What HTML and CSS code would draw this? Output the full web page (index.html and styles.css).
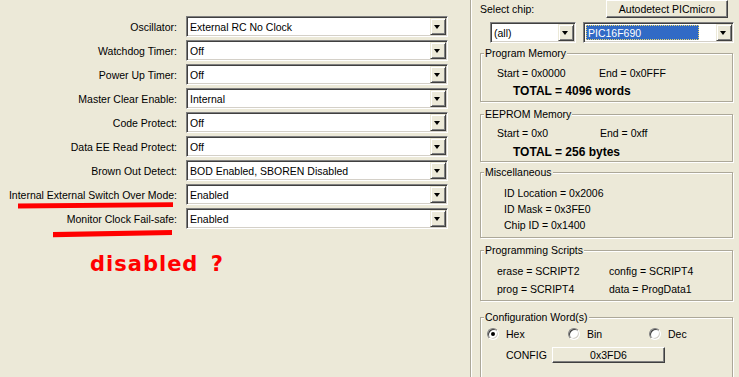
FILE: index.html
```html
<!DOCTYPE html>
<html>
<head>
<meta charset="utf-8">
<link rel="stylesheet" href="styles.css">
</head>
<body>
<div class="app">
  <div class="left">
    <div class="form">
      <div class="lbl">Oscillator:</div>
      <div class="combo"><span class="val">External RC No Clock</span><span class="arrow"></span></div>
      <div class="lbl">Watchdog Timer:</div>
      <div class="combo"><span class="val">Off</span><span class="arrow"></span></div>
      <div class="lbl">Power Up Timer:</div>
      <div class="combo"><span class="val">Off</span><span class="arrow"></span></div>
      <div class="lbl">Master Clear Enable:</div>
      <div class="combo"><span class="val">Internal</span><span class="arrow"></span></div>
      <div class="lbl">Code Protect:</div>
      <div class="combo"><span class="val">Off</span><span class="arrow"></span></div>
      <div class="lbl">Data EE Read Protect:</div>
      <div class="combo"><span class="val">Off</span><span class="arrow"></span></div>
      <div class="lbl">Brown Out Detect:</div>
      <div class="combo"><span class="val">BOD Enabled, SBOREN Disabled</span><span class="arrow"></span></div>
      <div class="lbl">Internal External Switch Over Mode:</div>
      <div class="combo"><span class="val">Enabled</span><span class="arrow"></span></div>
      <div class="lbl">Monitor Clock Fail-safe:</div>
      <div class="combo"><span class="val">Enabled</span><span class="arrow"></span></div>
    </div>
    <div class="note">disabled ?</div>
    <svg class="marks" width="470" height="377" viewBox="0 0 470 377">
      <polygon points="18,203.5 173,202.3 173,207 18,208.5" fill="#f00"/>
      <polygon points="53,232 172,230 172,235 53,237.3" fill="#f00"/>
    </svg>
  </div>
  <div class="right">
    <div class="row1">
      <span>Select chip:</span>
      <div class="btn autodetect">Autodetect PICmicro</div>
    </div>
    <div class="row2">
      <div class="combo family"><span class="val">(all)</span><span class="arrow"></span></div>
      <div class="combo chip"><span class="val"><span class="sel">PIC16F690</span></span><span class="arrow"></span></div>
    </div>
    <div class="group pm">
      <div class="legend">Program Memory</div>
      <div class="pair"><span class="c1">Start = 0x0000</span><span>End = 0x0FFF</span></div>
      <div class="total">TOTAL = 4096 words</div>
    </div>
    <div class="group ee">
      <div class="legend">EEPROM Memory</div>
      <div class="pair"><span class="c1">Start = 0x0</span><span>End = 0xff</span></div>
      <div class="total">TOTAL = 256 bytes</div>
    </div>
    <div class="group misc">
      <div class="legend">Miscellaneous</div>
      <div class="line">ID Location = 0x2006</div>
      <div class="line">ID Mask = 0x3FE0</div>
      <div class="line">Chip ID = 0x1400</div>
    </div>
    <div class="group scripts">
      <div class="legend">Programming Scripts</div>
      <div class="pair"><span class="c1">erase = SCRIPT2</span><span>config = SCRIPT4</span></div>
      <div class="pair"><span class="c1">prog = SCRIPT4</span><span>data = ProgData1</span></div>
    </div>
    <div class="group config">
      <div class="legend">Configuration Word(s)</div>
      <div class="radios">
        <div class="radio-item"><span class="radio checked"></span><span>Hex</span></div>
        <div class="radio-item"><span class="radio"></span><span>Bin</span></div>
        <div class="radio-item"><span class="radio"></span><span>Dec</span></div>
      </div>
      <div class="cfgrow">
        <span class="cfglbl">CONFIG</span>
        <div class="btn cfgbtn">0x3FD6</div>
      </div>
    </div>
  </div>
</div>
</body>
</html>
```
FILE: styles.css
```css
html, body {
  margin: 0;
  padding: 0;
  background: #ECE9D8;
  width: 739px;
  height: 377px;
  overflow: hidden;
  font-family: "Liberation Sans", Arial, sans-serif;
  font-size: 10.5px;
  color: #000;
}

.app {
  display: flex;
  height: 377px;
}

.left {
  position: relative;
  width: 470px;
  flex: none;
  padding-top: 16px;
  box-sizing: border-box;
}

.form {
  display: grid;
  grid-template-columns: 177px 262px;
  grid-auto-rows: 21px;
  column-gap: 9px;
  row-gap: 3px;
}

.lbl {
  display: flex;
  align-items: center;
  justify-content: flex-end;
  white-space: nowrap;
}

.combo {
  display: flex;
  box-sizing: border-box;
  height: 21px;
  background: #fff;
  border: 1px solid;
  border-color: #808080 #fff #fff #808080;
  box-shadow: inset 1px 1px 0 #404040, inset -1px -1px 0 #D4D0C8;
  padding: 1px;
}

.combo .val {
  flex: 1;
  display: flex;
  align-items: center;
  padding-left: 2px;
  white-space: nowrap;
  overflow: hidden;
}

.combo .arrow {
  position: relative;
  width: 16px;
  height: 17px;
  box-sizing: border-box;
  flex: none;
  background: #ECE9D8;
  border: 1px solid;
  border-color: #ECE9D8 #404040 #404040 #ECE9D8;
  box-shadow: inset 1px 1px 0 #fff, inset -1px -1px 0 #808080;
}

.combo .arrow::after {
  content: "";
  position: absolute;
  left: 3px;
  top: 6px;
  border-left: 3.5px solid transparent;
  border-right: 3.5px solid transparent;
  border-top: 4px solid #000;
}

.note {
  margin-top: 23px;
  margin-left: 90px;
  font-family: "DejaVu Sans", sans-serif;
  font-weight: bold;
  font-size: 21px;
  line-height: 24px;
  letter-spacing: 1px;
  word-spacing: 4px;
  color: #f00;
}

.marks {
  position: absolute;
  left: 0;
  top: 0;
  pointer-events: none;
}

.right {
  flex: 1;
  border-left: 1px solid #ACA899;
  box-shadow: inset 1px 0 0 #fff;
  padding: 0 5px 0 9px;
  display: flex;
  flex-direction: column;
}

.row1 {
  display: flex;
  align-items: center;
  height: 18px;
}

.btn {
  box-sizing: border-box;
  background: #ECE9D8;
  border: 1px solid;
  border-color: #fff #404040 #404040 #fff;
  box-shadow: inset -1px -1px 0 #808080;
  display: flex;
  align-items: center;
  justify-content: center;
  white-space: nowrap;
}

.autodetect {
  margin-left: auto;
  margin-right: 6px;
  width: 122px;
  height: 18px;
  align-self: flex-start;
  padding-bottom: 1px;
}

.row2 {
  display: flex;
  margin-top: 4px;
}

.family {
  margin-left: 10px;
  width: 86px;
}

.chip {
  margin-left: 7px;
  flex: 1;
}

.chip .val {
  padding: 1px 17px 1px 1px;
}

.chip .sel {
  flex: 1;
  height: 100%;
  display: flex;
  align-items: center;
  box-sizing: border-box;
  padding-left: 2px;
  background: #316AC5;
  color: #fff;
  outline: 1px dotted #e8d56a;
  outline-offset: -1px;
}

.group {
  position: relative;
  border: 1px solid #ACA899;
  box-shadow: 1px 1px 0 #fff, inset 1px 1px 0 #fff;
  margin-right: 1px;
}

.legend {
  position: absolute;
  top: -7px;
  left: 3px;
  padding: 0 1px;
  line-height: 12px;
  background: #ECE9D8;
}

.pair {
  display: flex;
  white-space: nowrap;
}

.pm { margin-top: 10px; padding: 10px 0 1px 16px; }
.pm .pair, .pm .total { line-height: 18px; }
.pm .c1 { width: 102px; }

.total {
  padding-left: 16px;
  font-weight: bold;
  font-size: 12px;
}

.ee { margin-top: 12px; padding: 9px 0 0 16px; }
.ee .pair, .ee .total { line-height: 18px; }
.ee .total { margin-top: 1px; }
.ee .c1 { width: 103px; }

.misc { margin-top: 10px; padding: 12px 0 4px 23px; }
.misc .line { line-height: 16px; }

.scripts { margin-top: 12px; padding: 11px 0 2px 16px; }
.scripts .pair { line-height: 18px; }
.scripts .c1 { width: 112px; }

.config { margin-top: 16px; padding: 8px 0 30px 6px; }

.radios {
  display: grid;
  grid-template-columns: 81px 81px 81px;
  height: 16px;
}

.radio-item {
  display: flex;
  align-items: center;
  gap: 7px;
}

.radio {
  position: relative;
  width: 12px;
  height: 12px;
  box-sizing: border-box;
  border-radius: 50%;
  background: #fff;
  border: 1px solid;
  border-color: #808080 #fff #fff #808080;
  box-shadow: inset 1px 1px 0 #404040, inset -1px -1px 0 #D4D0C8;
}

.radio.checked::after {
  content: "";
  position: absolute;
  left: 3px;
  top: 3px;
  width: 4px;
  height: 4px;
  border-radius: 50%;
  background: #000;
}

.cfgrow {
  display: flex;
  align-items: center;
  margin-top: 5px;
  padding-left: 19px;
  height: 16px;
}

.cfglbl {
  width: 46px;
}

.cfgbtn {
  width: 113px;
  height: 16px;
}
```
